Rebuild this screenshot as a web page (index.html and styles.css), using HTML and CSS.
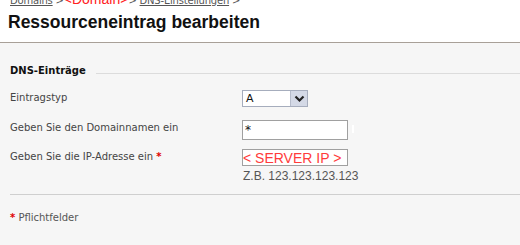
FILE: index.html
```html
<!DOCTYPE html>
<html lang="de">
<head>
<meta charset="utf-8">
<link rel="stylesheet" href="styles.css">
</head>
<body>
<div class="top">
  <div class="crumbs">
    <a href="#">Domains</a> &gt;<span class="cur">&lt;Domain&gt;</span>&gt; <a href="#">DNS-Einstellungen</a> &gt;
  </div>
  <h1 class="title">Ressourceneintrag bearbeiten</h1>
</div>
<div class="main">
  <div class="legend"><span class="legend-text">DNS-Einträge</span><span class="legend-line"></span></div>
  <div class="form">
    <div class="row row-type">
      <div class="label">Eintragstyp</div>
      <div class="field">
        <div class="select"><span class="select-val">A</span><span class="select-btn"><svg width="11" height="8" viewBox="0 0 11 8"><path d="M1.5 1.5 L5.5 5.5 L9.5 1.5" fill="none" stroke="#222" stroke-width="2.2"/></svg></span></div>
      </div>
    </div>
    <div class="row row-name">
      <div class="label">Geben Sie den Domainnamen ein</div>
      <div class="field"><div class="input">*</div><span class="mark"></span></div>
    </div>
    <div class="row row-ip">
      <div class="label">Geben Sie die IP-Adresse ein <span class="req">*</span></div>
      <div class="field">
        <div class="input input-ip">&lt; SERVER IP &gt;</div>
        <div class="hint">Z.B. 123.123.123.123</div>
      </div>
    </div>
  </div>
  <div class="sep"></div>
  <div class="note"><span class="req">*</span> Pflichtfelder</div>
</div>
</body>
</html>
```
FILE: styles.css
```css
html, body { margin: 0; padding: 0; }
body {
  width: 520px;
  height: 245px;
  overflow: hidden;
  background: #f6f6f6;
  font-family: "DejaVu Sans", Verdana, sans-serif;
  color: #444;
}
.top {
  display: flow-root;
  background: #fff;
  padding: 0 0 0 8px;
  height: 42px;
}
.crumbs {
  font-family: "DejaVu Sans", sans-serif;
  font-size: 10px;
  color: #555;
  line-height: 12px;
  height: 12px;
  margin-top: -7px;
  padding-left: 2px;
  white-space: nowrap;
  letter-spacing: -0.2px;
}
.crumbs a { color: #555; }
.crumbs .cur {
  color: #ff2222;
  font-family: "Liberation Sans", Arial, sans-serif;
  font-size: 14px;
  line-height: 12px;
  letter-spacing: 0;
}
.title {
  margin: 6px 0 0 0;
  font-family: "Liberation Sans", Arial, sans-serif;
  font-weight: bold;
  font-size: 17.5px;
  line-height: 22px;
  color: #111;
}
.main {
  border-top: 1px solid #a8a098;
  padding: 20px 0 0 10px;
}
.legend {
  display: flex;
  align-items: center;
  height: 14px;
}
.legend-text {
  font-weight: bold;
  font-size: 10px;
  color: #111;
}
.legend-line {
  flex: 1;
  height: 1px;
  background: #dcdcdc;
  margin-left: 10px;
  margin-top: 6px;
}
.form {
  padding-top: 13px;
  display: flex;
  flex-direction: column;
}
.row {
  display: grid;
  grid-template-columns: 232px 1fr;
  align-items: start;
}
.row-name { margin-top: 13px; }
.row-ip { margin-top: 9px; }
.label {
  font-size: 10px;
  line-height: 16px;
  color: #444;
}
.req { color: #e00000; font-weight: bold; }
.field { display: flex; flex-direction: column; position: relative; }
.select {
  width: 64px;
  height: 15px;
  border: 1px solid #a6adbd;
  background: #fff;
  display: flex;
  justify-content: space-between;
}
.select-val {
  font-size: 11px;
  line-height: 15px;
  padding-left: 3px;
  color: #111;
}
.select-btn {
  width: 16px;
  height: 15px;
  background: #d4d9e6;
  border-left: 1px solid #b6bccb;
  display: flex;
  align-items: center;
  justify-content: center;
}
.input {
  width: 102px;
  height: 18px;
  border: 1px solid #a0a0a0;
  background: #fff;
  font-size: 12px;
  line-height: 18px;
  padding-left: 2px;
  box-sizing: content-box;
  color: #111;
}
.mark {
  position: absolute;
  left: 110px;
  top: 5px;
  width: 2px;
  height: 8px;
  background: #fff;
}
.input-ip {
  height: 15px;
  line-height: 16px;
  padding-left: 0;
  width: 104px;
  font-family: "Liberation Sans", Arial, sans-serif;
  font-size: 14px;
  color: #ff3b3b;
  white-space: nowrap;
  overflow: hidden;
}
.hint {
  font-family: "Liberation Sans", Arial, sans-serif;
  font-size: 12px;
  color: #555;
  line-height: 14px;
  margin-top: 3px;
  padding-left: 1px;
}
.sep {
  height: 1px;
  background: #cfcfcf;
  margin-top: 11px;
}
.note {
  font-size: 10px;
  line-height: 12px;
  color: #555;
  margin-top: 17px;
}
```
